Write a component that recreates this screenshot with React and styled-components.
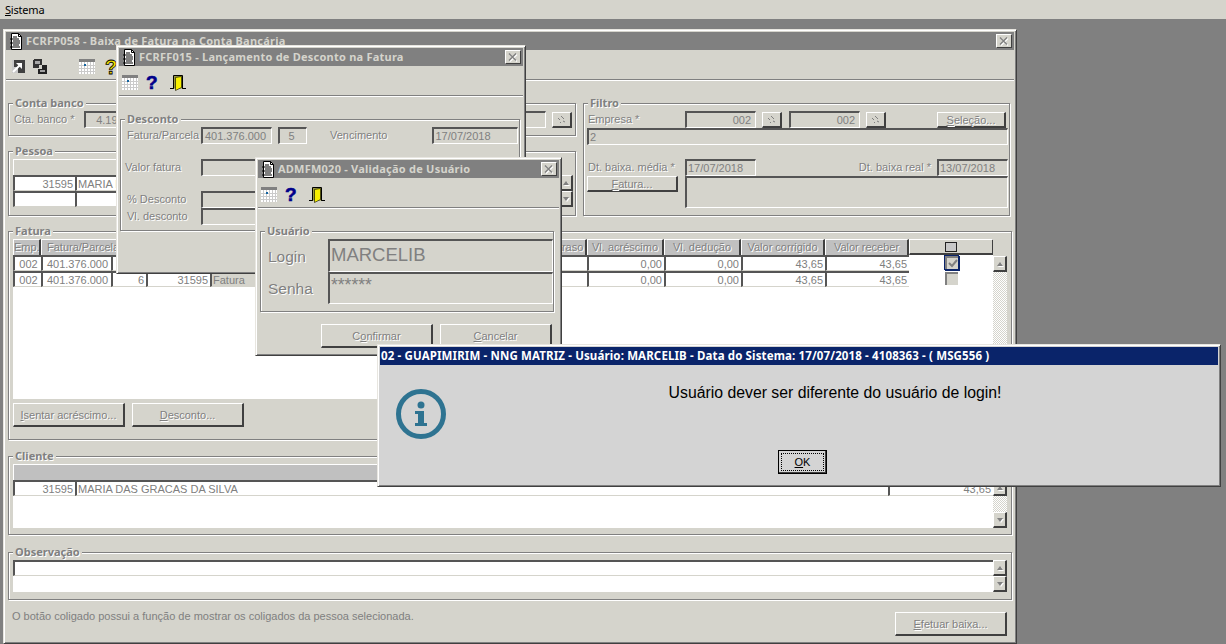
import React from "react";
import styled, { createGlobalStyle } from "styled-components";

const FACE = "#d5d4cc";
const GRAY = "#808080";
const DARK = "#555555";

const GlobalStyle = createGlobalStyle`
  html, body {
    margin: 0;
    padding: 0;
    width: 1226px;
    height: 644px;
    overflow: hidden;
    background: ${GRAY};
    font-family: "Liberation Sans", Arial, sans-serif;
    font-size: 11px;
  }
  * { box-sizing: border-box; }
`;

const Page = styled.div`
  width: 1226px;
  height: 644px;
  display: flex;
  flex-direction: column;
`;

const MenuBar = styled.div`
  height: 19px;
  background: ${FACE};
  padding-left: 5px;
  display: flex;
  align-items: center;
  font-family: "Noto Sans", sans-serif;
  font-size: 11px;
  letter-spacing: -0.2px;
  color: #000;
`;

const Desktop = styled.div`
  position: relative;
  flex: 1;
  background: ${GRAY};
`;

const Window = styled.section`
  position: absolute;
  left: ${p => p.$x}px;
  top: ${p => p.$y}px;
  width: ${p => p.$w}px;
  height: ${p => p.$h}px;
  background: ${FACE};
  border: 1px solid;
  border-color: #e8e6e0 #404040 #404040 #e8e6e0;
  box-shadow: inset 1px 1px 0 #fff, inset -1px -1px 0 ${GRAY};
  padding: 2px;
  display: flex;
  flex-direction: column;
`;

const TitleBar = styled.header`
  height: 18px;
  flex: none;
  background: ${GRAY};
  display: flex;
  align-items: center;
  padding: 0 2px 0 3px;
  gap: 3px;
  font-family: "Noto Sans", sans-serif;
  font-weight: 700;
  font-size: 11px;
  letter-spacing: 0.23px;
  color: ${FACE};
  white-space: nowrap;
`;

const TitleText = styled.span`
  flex: 1;
  overflow: hidden;
  padding-bottom: 2px;
`;

const CloseButton = styled.div`
  width: 16px;
  height: 14px;
  flex: none;
  background: ${FACE};
  border: 1px solid;
  border-color: #fff #404040 #404040 #fff;
  display: flex;
  align-items: center;
  justify-content: center;
`;

const Toolbar = styled.div`
  height: 30px;
  flex: none;
  display: flex;
  align-items: center;
  padding: 4px 0 0 ${p => p.$pl || 3}px;
  border-bottom: 1px solid ${GRAY};
  box-shadow: 0 1px 0 #fff;
`;

const ToolSlot = styled.div`
  width: ${p => p.$w || 24}px;
  height: 20px;
  display: flex;
  align-items: center;
  flex: none;
`;

const HelpMark = styled.span`
  font-family: "Liberation Sans", sans-serif;
  font-weight: 700;
  font-size: ${p => (p.$yellow ? 20 : 19)}px;
  line-height: 20px;
  padding-left: ${p => (p.$yellow ? 1 : 0)}px;
  color: ${p => (p.$yellow ? "#f4e200" : "#00008a")};
  -webkit-text-stroke: ${p => (p.$yellow ? "0.8px #000" : "0.6px #00008a")};
`;

const MainForm = styled.div`
  padding: 23px 2px 0;
  display: flex;
  flex-direction: column;
`;

const TopArea = styled.div`
  display: grid;
  grid-template-columns: 568px 427px;
  column-gap: 7px;
`;

const Stack = styled.div`
  display: flex;
  flex-direction: column;
  gap: 15px;
`;

const Group = styled.fieldset`
  position: relative;
  margin: ${p => p.$mt || 0}px 0 0;
  width: ${p => (p.$w ? `${p.$w}px` : "auto")};
  height: ${p => p.$h}px;
  padding: ${p => p.$pt ?? 7}px 0 0 ${p => p.$pl ?? 4}px;
  border: 1px solid ${GRAY};
  box-shadow: 1px 1px 0 #fff, inset 1px 1px 0 #fff;
`;

const Legend = styled.span`
  position: absolute;
  top: -9px;
  left: 4px;
  padding: 0 2px;
  background: ${FACE};
  font-family: "Noto Sans", sans-serif;
  font-weight: 700;
  font-size: 11px;
  line-height: 15px;
  color: ${GRAY};
  text-shadow: 1px 1px 0 #fff;
  white-space: nowrap;
`;

const Row = styled.div`
  display: flex;
  align-items: flex-start;
  margin-top: ${p => p.$mt || 0}px;
  height: ${p => p.$h || 17}px;
`;

const Label = styled.span`
  flex: none;
  width: ${p => (p.$w ? `${p.$w}px` : "auto")};
  margin-left: ${p => p.$ml || 0}px;
  padding-top: ${p => p.$pt ?? 2}px;
  text-align: ${p => p.$align || "left"};
  font-size: ${p => p.$size || 11}px;
  line-height: ${p => (p.$size ? p.$size + 4 : 13)}px;
  color: ${GRAY};
  text-shadow: 1px 1px 0 #fff;
  white-space: nowrap;
`;

const Field = styled.div`
  flex: none;
  width: ${p => p.$w}px;
  height: ${p => p.$h || 17}px;
  margin-left: ${p => p.$ml || 0}px;
  background: ${FACE};
  border-style: solid;
  border-width: 2px 1px 1px 2px;
  border-color: ${DARK} #fff #fff ${DARK};
  padding: ${p => p.$pt ?? 1}px 4px 0 1px;
  text-align: ${p => p.$align || "left"};
  font-size: ${p => p.$size || 11}px;
  line-height: ${p => (p.$size ? p.$size + 4 : 12)}px;
  color: ${GRAY};
  white-space: nowrap;
  overflow: hidden;
`;

const LookupButton = styled.div`
  flex: none;
  width: 20px;
  height: 16px;
  margin-left: ${p => p.$ml || 6}px;
  margin-top: 1px;
  background: ${FACE};
  border-style: solid;
  border-width: 1px 2px 2px 1px;
  border-color: #fff #404040 #404040 #fff;
  display: flex;
  align-items: center;
  justify-content: center;
`;

const Button = styled.div`
  flex: none;
  width: ${p => p.$w || 112}px;
  height: ${p => p.$h || 24}px;
  margin-top: ${p => p.$mt || 0}px;
  margin-left: ${p => (p.$auto ? "auto" : `${p.$ml || 0}px`)};
  margin-right: ${p => p.$mr || 0}px;
  background: ${FACE};
  border-style: solid;
  border-width: 1px 2px 2px 1px;
  border-color: #fff #404040 #404040 #fff;
  display: flex;
  align-items: center;
  justify-content: center;
  color: ${GRAY};
  text-shadow: 1px 1px 0 #fff;
  white-space: nowrap;
`;

const GridWrap = styled.div`
  display: flex;
  align-items: stretch;
`;

const Table = styled.div`
  width: ${p => p.$w}px;
  height: ${p => p.$h}px;
  flex: none;
  background: ${p => (p.$plain ? "transparent" : "#fff")};
  overflow: hidden;
`;

const TableRow = styled.div`
  display: flex;
  height: 16px;
`;

const HeadCell = styled.div`
  flex: none;
  width: ${p => p.$w}px;
  height: 16px;
  background: #c0c0c0;
  border-right: 2px solid #404040;
  border-top: 1px solid #fff;
  border-left: 1px solid #fff;
  padding-left: ${p => p.$pl || 0}px;
  text-align: ${p => (p.$pl ? "left" : "center")};
  font-size: 11px;
  line-height: 14px;
  color: ${GRAY};
  text-shadow: 1px 1px 0 #fff;
  white-space: nowrap;
  overflow: hidden;
`;

const HeadBar = styled.div`
  height: 16px;
  background: ${p => p.$bg || "#c0c0c0"};
  border-top: 1px solid #fff;
  border-left: 1px solid #fff;
`;

const CheckHead = styled.div`
  flex: none;
  width: ${p => p.$w}px;
  height: 16px;
  background: ${FACE};
  border-style: solid;
  border-width: 1px 2px 2px 1px;
  border-color: #fff #404040 #404040 #fff;
  display: flex;
  align-items: center;
  justify-content: center;
`;

const HeadBox = styled.span`
  width: 12px;
  height: 10px;
  background: #c8c8c8;
  border: 1px solid #222;
`;

const Cell = styled.div`
  flex: none;
  width: ${p => p.$w}px;
  height: 16px;
  background: ${p => p.$bg || "#fff"};
  border-style: solid;
  border-width: 2px 0 1px 2px;
  border-color: ${DARK} transparent ${FACE} ${DARK};
  padding: 0 ${p => (p.$align === "right" ? 2 : 0)}px 0 1px;
  text-align: ${p => p.$align || "left"};
  font-size: 11px;
  line-height: 14px;
  color: ${GRAY};
  white-space: nowrap;
  overflow: hidden;
`;

const CheckCell = styled.div`
  flex: none;
  width: ${p => p.$w}px;
  height: 16px;
  display: flex;
  justify-content: center;
  background: #fff;
`;

const CheckBox = styled.span`
  width: 13px;
  height: 13px;
  margin-top: 1px;
  background: ${FACE};
  border-style: solid;
  border-width: 2px 0 0 2px;
  border-color: ${GRAY};
  box-shadow: ${p => (p.$focus ? "0 0 0 1px #0a246a, 1px 1px 0 1px #0a246a" : "none")};
  display: flex;
  align-items: center;
  justify-content: center;
`;

const ScrollCol = styled.div`
  flex: none;
  width: ${p => p.$w || 14}px;
  margin-top: ${p => p.$mt || 0}px;
  margin-left: ${p => p.$ml || 0}px;
  display: flex;
  flex-direction: column;
`;

const ScrollButton = styled.div`
  flex: none;
  height: 16px;
  background: ${FACE};
  border-style: solid;
  border-width: 1px 2px 2px 1px;
  border-color: #fff #404040 #404040 #fff;
  display: flex;
  align-items: center;
  justify-content: center;
  &::after {
    content: "";
    border-left: 3px solid transparent;
    border-right: 3px solid transparent;
    ${p => (p.$down ? `border-top: 4px solid ${GRAY};` : `border-bottom: 4px solid ${GRAY};`)}
    filter: drop-shadow(1px 1px 0 #fff);
  }
`;

const ScrollTrack = styled.div`
  flex: 1;
  background: repeating-conic-gradient(${FACE} 0 25%, #fff 0 50%) 0 0 / 2px 2px;
`;

const Footer = styled.div`
  display: flex;
  align-items: flex-start;
  margin-top: 9px;
  padding: 0 5px 0 4px;
`;

const Hint = styled.span`
  font-size: 11px;
  line-height: 14px;
  color: ${GRAY};
  white-space: nowrap;
`;

const SubForm = styled.div`
  padding: ${p => p.$pt}px ${p => p.$pr || 4}px 0 ${p => p.$pl || 2}px;
`;

const ButtonRow = styled.div`
  display: flex;
  gap: 7px;
  margin: 12px 0 0 61px;
`;

const DialogBox = styled(Window)`
  background: #d4d4d4;
`;

const DialogTitle = styled.header`
  height: 18px;
  flex: none;
  background: #0a246a;
  color: #fff;
  padding: 0 0 2px 1px;
  display: flex;
  align-items: center;
  font-family: "Noto Sans", sans-serif;
  font-weight: 700;
  font-size: 11.5px;
  letter-spacing: 0.13px;
  white-space: nowrap;
`;

const DialogBody = styled.div`
  flex: 1;
  display: grid;
  grid-template-columns: 72px 1fr;
`;

const IconSlot = styled.div`
  padding: 24px 0 0 16px;
`;

const MessageColumn = styled.div`
  display: flex;
  flex-direction: column;
`;

const Message = styled.p`
  margin: 19px 0 0;
  text-align: center;
  font-size: 15.8px;
  line-height: 18px;
  color: #000;
`;

const OkButton = styled.div`
  width: 49px;
  height: 24px;
  margin: 48px 0 0 326px;
  background: #d4d4d4;
  border: 1px solid #000;
  box-shadow: inset -1px -1px 0 #404040;
  padding: 2px;
  font-size: 11px;
`;

const OkFocus = styled.div`
  height: 100%;
  border: 1px dotted #000;
  display: flex;
  align-items: center;
  justify-content: center;
  color: #000;
`;

const DocIcon = () => (
  <svg width="14" height="17" viewBox="0 0 14 17">
    <path d="M2.5.5h7l3 3v13h-10z" fill="#fff" stroke="#000" />
    <path d="M9.5.5v3h3" fill="none" stroke="#000" />
    <path d="M4 4h4M1 6h9M4 8h7M1 10h10M4 12h6M1 14h10" stroke="#000" strokeWidth="1.2" />
  </svg>
);

const CloseIcon = () => (
  <svg width="10" height="9" viewBox="0 0 10 9">
    <path d="M2 1.5l7 7M9 1.5l-7 7" stroke="#fff" strokeWidth="1.4" />
    <path d="M1 .5l7 7M8 .5l-7 7" stroke={GRAY} strokeWidth="1.4" />
  </svg>
);

const ArrowIcon = () => (
  <svg width="13" height="13" viewBox="0 0 13 13">
    <rect width="13" height="13" fill="#c8c8c8" />
    <path d="M2 0h11v13H6V7H2z" fill="#404040" />
    <path d="M1 12l7-7" stroke="#fff" strokeWidth="2" />
    <path d="M4 3h6v6z" fill="#fff" />
  </svg>
);

const CascadeIcon = () => (
  <svg width="14" height="15" viewBox="0 0 14 15">
    <path d="M0 9V1h1V0h8v6H6v3z" fill="#333" />
    <rect x="2" y="2" width="5" height="3" fill="#a8a8a8" />
    <path d="M9 6h5v9H5V10h4z" fill="#222" />
    <rect x="7" y="11" width="5" height="2" fill="#a0a0a0" />
  </svg>
);

const CalendarIcon = () => (
  <svg width="16" height="15" viewBox="0 0 16 15">
    <rect width="16" height="15" fill="#fff" />
    <rect width="16" height="3" fill="#808080" />
    <path d="M0 6.5h16M0 9.5h16M0 12.5h16M2.5 3v12M5.5 3v12M8.5 3v12M11.5 3v12M14.5 3v12" stroke="#cacaca" />
    <rect x="5" y="5" width="2" height="2" fill="#1464a0" />
  </svg>
);

const DoorIcon = () => (
  <svg width="16" height="16" viewBox="0 0 16 16">
    <path d="M0 13.5h4M12 13.5h4" stroke="#000" />
    <path d="M3.5 13.5V.5h9v13" fill="#9a9a40" stroke="#000" />
    <path d="M5.5 2.5l6-1v11l-6 3z" fill="#f8f000" stroke="#000" strokeWidth=".6" />
  </svg>
);

const LookupIcon = () => (
  <svg width="10" height="9" viewBox="0 0 10 9">
    <path d="M1 3l2 2M4 1l3 3M3 7l1 1M6 6l2 1" stroke={GRAY} strokeWidth="1" />
  </svg>
);

const CheckMark = () => (
  <svg width="10" height="9" viewBox="0 0 10 9">
    <path d="M1 4l3 3 5-6" fill="none" stroke={GRAY} strokeWidth="2" />
  </svg>
);

const InfoIcon = () => (
  <svg width="50" height="50" viewBox="0 0 50 50">
    <circle cx="25" cy="25" r="22.5" fill="none" stroke="#2e7391" strokeWidth="5" />
    <circle cx="25" cy="16" r="3.5" fill="#2e7391" />
    <path d="M19 22h9v12h3v3H19v-3h3v-9h-3z" fill="#2e7391" />
  </svg>
);

const WindowTitle = ({ children }) => (
  <TitleBar>
    <DocIcon />
    <TitleText>{children}</TitleText>
    <CloseButton>
      <CloseIcon />
    </CloseButton>
  </TitleBar>
);

const DialogTools = () => (
  <Toolbar>
    <ToolSlot>
      <CalendarIcon />
    </ToolSlot>
    <ToolSlot>
      <HelpMark>?</HelpMark>
    </ToolSlot>
    <ToolSlot>
      <DoorIcon />
    </ToolSlot>
  </Toolbar>
);

// the columns between Fatura/Parcela and Vl. acréscimo sit behind the dialogs
const faturaCols = [
  { name: "Emp.", w: 28 },
  { name: "Fatura/Parcela", w: 105, pl: 5 },
  { name: "", w: 64 },
  { name: "", w: 315 },
  { name: "Dias atraso", w: 62 },
  { name: "Vl. acréscimo", w: 77 },
  { name: "Vl. dedução", w: 77 },
  { name: "Valor corrigido", w: 84 },
  { name: "Valor receber", w: 84 },
];

const faturaRows = [
  { parcela: "5", checked: true },
  { parcela: "6", checked: false },
];

const App = () => (
  <Page>
    <GlobalStyle />
    <MenuBar>
      <span>
        <u>S</u>istema
      </span>
    </MenuBar>
    <Desktop>
      <Window $x={3} $y={10} $w={1014} $h={615}>
        <WindowTitle>FCRFP058 - Baixa de Fatura na Conta Bancária</WindowTitle>
        <Toolbar $pl={6}>
          <ToolSlot $w={21}>
            <ArrowIcon />
          </ToolSlot>
          <ToolSlot $w={46}>
            <CascadeIcon />
          </ToolSlot>
          <ToolSlot $w={25}>
            <CalendarIcon />
          </ToolSlot>
          <ToolSlot>
            <HelpMark $yellow>?</HelpMark>
          </ToolSlot>
        </Toolbar>
        <MainForm>
          <TopArea>
            <Stack>
              <Group $h={33}>
                <Legend>Conta banco</Legend>
                <Row>
                  <Label $w={70} $ml={1}>
                    Cta. banco *
                  </Label>
                  <Field $w={462}>&nbsp;&nbsp;&nbsp;4.19</Field>
                  <LookupButton>
                    <LookupIcon />
                  </LookupButton>
                </Row>
              </Group>
              <Group $h={65} $pt={7}>
                <Legend>Pessoa</Legend>
                <GridWrap>
                  <Table $w={545} $h={48} $plain>
                    <HeadBar $bg={FACE} />
                    <TableRow>
                      <Cell $w={62} $align="right">
                        31595
                      </Cell>
                      <Cell $w={483}>MARIA DAS GRACAS DA SILVA</Cell>
                    </TableRow>
                    <TableRow>
                      <Cell $w={62} />
                      <Cell $w={483} />
                    </TableRow>
                  </Table>
                  <ScrollCol $mt={16} $ml={1}>
                    <ScrollButton />
                    <ScrollButton $down />
                  </ScrollCol>
                </GridWrap>
              </Group>
            </Stack>
            <Group $h={113} $pl={3}>
              <Legend>Filtro</Legend>
              <Row>
                <Label $w={98} $ml={1}>
                  Empresa *
                </Label>
                <Field $w={71} $align="right" $ml={-1}>
                  002
                </Field>
                <LookupButton>
                  <LookupIcon />
                </LookupButton>
                <Field $w={71} $ml={7} $align="right">
                  002
                </Field>
                <LookupButton>
                  <LookupIcon />
                </LookupButton>
                <Button $w={69} $h={16} $mt={1} $auto $mr={3}>
                  <span>
                    <u>S</u>eleção...
                  </span>
                </Button>
              </Row>
              <Row>
                <Field $w={421}>2</Field>
              </Row>
              <Row $mt={14}>
                <Label $w={98} $ml={1}>
                  Dt. baixa. média *
                </Label>
                <Field $w={71} $ml={-1}>
                  17/07/2018
                </Field>
                <Label $w={175} $align="right">
                  Dt. baixa real *
                </Label>
                <Field $w={71} $ml={6}>
                  13/07/2018
                </Field>
              </Row>
              <Row $h={32}>
                <Button $w={91} $h={16}>
                  <span>
                    <u>F</u>atura...
                  </span>
                </Button>
                <Field $w={323} $h={32} $ml={7} />
              </Row>
            </Group>
          </TopArea>

          <Group $h={209} $mt={15} $pt={7}>
            <Legend>Fatura</Legend>
            <GridWrap>
              <Table $w={980} $h={160}>
                <TableRow>
                  {faturaCols.map(col => (
                    <HeadCell key={col.name + col.w} $w={col.w} $pl={col.pl}>
                      {col.name}
                    </HeadCell>
                  ))}
                  <CheckHead $w={85}>
                    <HeadBox />
                  </CheckHead>
                </TableRow>
                {faturaRows.map(row => (
                  <TableRow key={row.parcela}>
                    <Cell $w={28} $align="center">
                      002
                    </Cell>
                    <Cell $w={70} $align="center">
                      401.376.000
                    </Cell>
                    <Cell $w={35} $align="right">
                      {row.parcela}
                    </Cell>
                    <Cell $w={64} $align="right">
                      31595
                    </Cell>
                    <Cell $w={315} $bg={FACE}>
                      Fatura
                    </Cell>
                    <Cell $w={62} />
                    <Cell $w={77} $align="right">
                      0,00
                    </Cell>
                    <Cell $w={77} $align="right">
                      0,00
                    </Cell>
                    <Cell $w={84} $align="right">
                      43,65
                    </Cell>
                    <Cell $w={84} $align="right">
                      43,65
                    </Cell>
                    <CheckCell $w={85}>
                      <CheckBox $focus={row.checked}>{row.checked && <CheckMark />}</CheckBox>
                    </CheckCell>
                  </TableRow>
                ))}
              </Table>
              <ScrollCol $mt={17}>
                <ScrollButton />
                <ScrollTrack />
              </ScrollCol>
            </GridWrap>
            <Row $mt={4} $h={24}>
              <Button>
                <span>
                  <u>I</u>sentar acréscimo...
                </span>
              </Button>
              <Button $ml={7}>
                <span>
                  <u>D</u>esconto...
                </span>
              </Button>
            </Row>
          </Group>

          <Group $h={79} $mt={16} $pt={7}>
            <Legend>Cliente</Legend>
            <GridWrap>
              <Table $w={980} $h={64}>
                <HeadBar />
                <TableRow>
                  <Cell $w={62} $align="right">
                    31595
                  </Cell>
                  <Cell $w={813}>MARIA DAS GRACAS DA SILVA</Cell>
                  <Cell $w={105} $align="right">
                    43,65
                  </Cell>
                </TableRow>
              </Table>
              <ScrollCol $mt={16}>
                <ScrollButton />
                <ScrollTrack />
                <ScrollButton $down />
              </ScrollCol>
            </GridWrap>
          </Group>

          <Group $h={48} $mt={17} $pt={7}>
            <Legend>Observação</Legend>
            <GridWrap>
              <Table $w={980} $h={32}>
                <TableRow>
                  <Cell $w={980} />
                </TableRow>
              </Table>
              <ScrollCol>
                <ScrollButton />
                <ScrollButton $down />
              </ScrollCol>
            </GridWrap>
          </Group>

          <Footer>
            <Hint>O botão coligado possui a função de mostrar os coligados da pessoa selecionada.</Hint>
            <Button $mt={3} $auto>
              <span>
                <u>E</u>fetuar baixa...
              </span>
            </Button>
          </Footer>
        </MainForm>
      </Window>

      <Window $x={116} $y={26} $w={410} $h={229}>
        <WindowTitle>FCRFF015 - Lançamento de Desconto na Fatura</WindowTitle>
        <DialogTools />
        <SubForm $pt={23} $pr={3} $pl={1}>
          <Group $h={112} $w={400} $pl={6}>
            <Legend>Desconto</Legend>
            <Row>
              <Label $w={74}>Fatura/Parcela</Label>
              <Field $w={71} $align="center">
                401.376.000
              </Field>
              <Field $w={29} $ml={6} $align="center">
                5
              </Field>
              <Label $ml={23}>Vencimento</Label>
              <Field $w={86} $ml={45}>
                17/07/2018
              </Field>
            </Row>
            <Row $mt={15}>
              <Label $w={76} $ml={-2}>
                Valor fatura
              </Label>
              <Field $w={120} />
            </Row>
            <Row $mt={15} $h={16}>
              <Label $w={74}>% Desconto</Label>
              <Field $w={120} $h={17} />
            </Row>
            <Row $mt={1}>
              <Label $w={74}>Vl. desconto</Label>
              <Field $w={120} />
            </Row>
          </Group>
        </SubForm>
      </Window>

      <Window $x={255} $y={138} $w={307} $h={199}>
        <WindowTitle>ADMFM020 - Validação de Usuário</WindowTitle>
        <DialogTools />
        <SubForm $pt={23} $pl={2} $pr={3}>
          <Group $h={81} $w={294} $pt={7} $pl={7}>
            <Legend>Usuário</Legend>
            <Row $h={33}>
              <Label $w={60} $size={15.5} $pt={8}>
                Login
              </Label>
              <Field $w={225} $h={33} $size={18.5} $pt={3}>
                MARCELIB
              </Field>
            </Row>
            <Row $h={32}>
              <Label $w={60} $size={15.5} $pt={7}>
                Senha
              </Label>
              <Field $w={225} $h={32} $size={17.5}>
                ******
              </Field>
            </Row>
          </Group>
          <ButtonRow>
            <Button>
              <span>
                C<u>o</u>nfirmar
              </span>
            </Button>
            <Button>
              <span>
                <u>C</u>ancelar
              </span>
            </Button>
          </ButtonRow>
        </SubForm>
      </Window>

      <DialogBox $x={377} $y={325} $w={844} $h={143}>
        <DialogTitle>
          02 - GUAPIMIRIM - NNG MATRIZ - Usuário: MARCELIB - Data do Sistema: 17/07/2018 - 4108363 - ( MSG556 )
        </DialogTitle>
        <DialogBody>
          <IconSlot>
            <InfoIcon />
          </IconSlot>
          <MessageColumn>
            <Message>Usuário dever ser diferente do usuário de login!</Message>
            <OkButton>
              <OkFocus>
                <span>
                  <u>O</u>K
                </span>
              </OkFocus>
            </OkButton>
          </MessageColumn>
        </DialogBody>
      </DialogBox>
    </Desktop>
  </Page>
);

export default App;
